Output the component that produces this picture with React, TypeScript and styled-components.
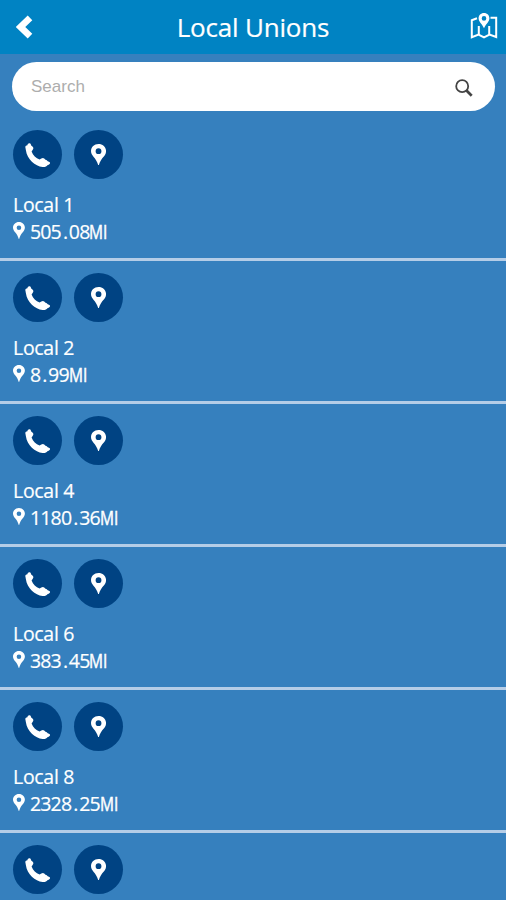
import React from 'react'
import styled, { createGlobalStyle } from 'styled-components'

type Union = {
    name?: string
    miles?: string
}

const unions: Union[] = [
    { name: 'Local 1', miles: '505.08' },
    { name: 'Local 2', miles: '8.99' },
    { name: 'Local 4', miles: '1180.36' },
    { name: 'Local 6', miles: '383.45' },
    { name: 'Local 8', miles: '2328.25' },
    {},
]

const GlobalStyle = createGlobalStyle`
    * {
        box-sizing: border-box;
    }
    body {
        margin: 0;
        background: #3680be;
        overflow: hidden;
    }
`
const Screen = styled.main`
    display: flex;
    flex-direction: column;
    height: 900px;
    overflow: hidden;
    background: #3680be;
    color: #fff;
    font-family: 'Trebuchet MS', 'Open Sans', 'Noto Sans', sans-serif;
    -webkit-text-stroke: 0.2px;
`
const Header = styled.header`
    display: grid;
    grid-template-columns: 60px 1fr 60px;
    align-items: center;
    flex: none;
    height: 54px;
    padding: 0 8px 0 16px;
    background: #0083c3;
`
const Title = styled.h1`
    margin: 0 0 0 -8px;
    font-size: 26px;
    line-height: 54px;
    font-weight: 400;
    text-align: center;
    letter-spacing: -0.2px;
`
const IconButton = styled.button<{ $end?: boolean }>`
    display: flex;
    justify-content: ${p => (p.$end ? 'flex-end' : 'flex-start')};
    padding: ${p => (p.$end ? '0 0 2px' : '0')};
    border: 0;
    background: none;
    color: inherit;
`
const SearchBar = styled.label`
    display: flex;
    align-items: center;
    flex: none;
    height: 49px;
    margin: 8px 11px 7px 12px;
    padding: 0 22px 0 19px;
    border-radius: 25px;
    background: #fff;
    color: #444;
    svg {
        margin-top: 3px;
    }
`
const SearchInput = styled.input`
    flex: 1;
    min-width: 0;
    padding: 0;
    border: 0;
    outline: 0;
    background: none;
    font: 17px 'Liberation Sans', Arial, sans-serif;
    -webkit-text-stroke: 0;
    &::placeholder {
        color: #adadad;
        opacity: 1;
    }
`
const List = styled.ul`
    flex: none;
    margin: 0;
    padding: 0;
    list-style: none;
`
const Row = styled.li`
    height: 143px;
    padding: 12px 13px 0;
    border-bottom: 3px solid #b5cde7;
`
const Actions = styled.div`
    display: flex;
    gap: 12px;
    margin-bottom: 12px;
`
const RoundButton = styled.button`
    display: flex;
    align-items: center;
    justify-content: center;
    width: 49px;
    height: 49px;
    padding: 0;
    border: 0;
    border-radius: 50%;
    background: #004383;
    color: #fff;
`
const Name = styled.div`
    font-size: 19.5px;
    line-height: 27px;
    letter-spacing: -0.3px;
`
const Distance = styled.div`
    display: flex;
    align-items: center;
    height: 27px;
    font-size: 19.5px;
    line-height: 27px;
    letter-spacing: -0.8px;
    svg {
        margin: 0 5px 2px 0;
    }
`
const Point = styled.span`
    padding: 0 1.5px 0 2px;
`
const Unit = styled.span`
    display: inline-block;
    letter-spacing: 0;
    transform: scaleX(0.8);
    transform-origin: left;
    -webkit-text-stroke: 0.5px;
`

const BackIcon = () => (
    <svg width='17' height='26' viewBox='0 0 17 26'>
        <path d='M14 3.8 4.4 13 14 22.2' fill='none' stroke='currentColor' strokeWidth='6.6' />
    </svg>
)

const MapIcon = () => (
    <svg width='28' height='26' viewBox='0 0 28 26' fill='none' stroke='currentColor' strokeWidth='2'>
        <path d='M7 5.3 1.8 7.3V24.2L8.5 21.5 14 24.3 19.5 21.5 26.2 24V4.8L20.5 4.8' />
        <path d='M8.8 13v8.5M19.2 13v8.5' />
        <path
            fill='currentColor'
            stroke='none'
            fillRule='evenodd'
            d='M14 0C10.7 0 8.6 2.3 8.6 5.2c0 3.5 3.4 5.6 5.4 10.1 2-4.5 5.4-6.6 5.4-10.1C19.4 2.3 17.3 0 14 0Zm0 3.1a2.3 2.3 0 1 1 0 4.6 2.3 2.3 0 0 1 0-4.6Z'
        />
    </svg>
)

const SearchIcon = () => (
    <svg width='18' height='18' viewBox='0 0 18 18' fill='none' stroke='currentColor'>
        <circle cx='7.2' cy='7.2' r='6' strokeWidth='1.8' />
        <path d='m11.5 11.5 5.2 5.2' strokeWidth='2.7' />
    </svg>
)

const PhoneIcon = () => (
    <svg width='26' height='26' viewBox='0 0 26 26' fill='currentColor'>
        <path d='M.3 5C.5 4 1.2 3.4 2.4 3.3 2.5 1.9 3.5 1 4.7 1.2c.9.2 1.3.9 1.3 2.1l1.7 1.5c.9.9.9 2-.1 3.2l-1 1.4c1.4 3.7 4.3 6.7 8 8.2l1.7-1c1.2-.8 2.1-.7 2.9 0l1.3 1.2c1.1.1 1.7.6 1.8 1.3l2.1.8c1 .7.9 1.5-.1 2.4-.5.5-1 .7-1.6.6-.7 1.4-2.8 2.3-5.2 2.1C10.3 24.2 2 17.4.9 8.3Z' />
    </svg>
)

const PinIcon = ({ size }: { size: number }) => (
    <svg width={size * 0.7} height={size} viewBox='0 0 14 20' fill='currentColor'>
        <path
            fillRule='evenodd'
            d='M7 0C3 0 0 2.9 0 6.6 0 8.8 1.1 10.5 2.5 12.1 4.2 14 5.8 16.5 6.8 20h.4c1-3.5 2.6-6 4.3-7.9C12.9 10.5 14 8.8 14 6.6 14 2.9 11 0 7 0Zm0 4a2.7 2.7 0 1 1 0 5.4A2.7 2.7 0 0 1 7 4Z'
        />
    </svg>
)

const UnionRow = ({ name, miles }: Union) => {
    const [whole, fraction] = (miles ?? '').split('.')
    return (
        <Row>
            <Actions>
                <RoundButton aria-label='Call'>
                    <PhoneIcon />
                </RoundButton>
                <RoundButton aria-label='Directions'>
                    <PinIcon size={21.5} />
                </RoundButton>
            </Actions>
            {name && <Name>{name}</Name>}
            {miles && (
                <Distance>
                    <PinIcon size={17} />
                    <span>{whole}<Point>.</Point>{fraction}<Unit>MI</Unit></span>
                </Distance>
            )}
        </Row>
    )
}

const App = () => {
    return (
        <>
            <GlobalStyle />
            <Screen>
                <Header>
                    <IconButton aria-label='Back'>
                        <BackIcon />
                    </IconButton>
                    <Title>Local Unions</Title>
                    <IconButton $end aria-label='Map'>
                        <MapIcon />
                    </IconButton>
                </Header>
                <SearchBar>
                    <SearchInput placeholder='Search' />
                    <SearchIcon />
                </SearchBar>
                <List>
                    {unions.map((union, i) => (
                        <UnionRow key={i} {...union} />
                    ))}
                </List>
            </Screen>
        </>
    )
}

export default App
